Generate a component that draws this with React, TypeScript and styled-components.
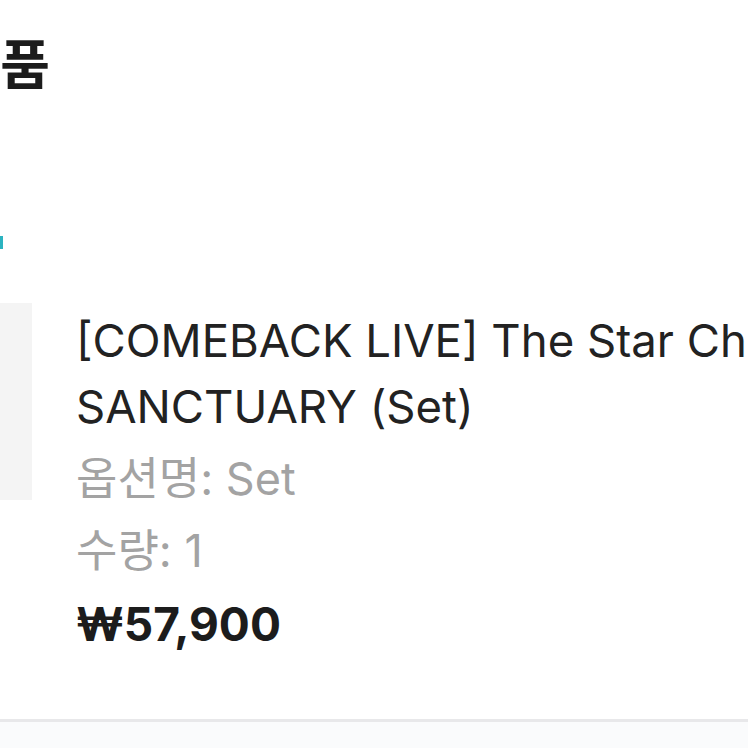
import React from 'react';
import styled, { createGlobalStyle } from 'styled-components';

const GlobalStyle = createGlobalStyle`
  html, body {
    margin: 0;
    padding: 0;
    background: #ffffff;
  }
  body {
    font-family: Inter, "Noto Sans", "Noto Sans CJK KR", sans-serif;
    color: #1f1f1f;
  }
`;

const Page = styled.div`
  width: 748px;
  height: 748px;
  overflow: hidden;
  display: flex;
  flex-direction: column;
  background: #ffffff;
`;

const Section = styled.section`
  display: flex;
  flex-direction: column;
  flex: 1;
`;

// the page is scrolled sideways, only the end of the heading is visible
const Heading = styled.h2`
  margin: 26px 0 0;
  width: 50px;
  display: flex;
  justify-content: flex-end;
  font-family: "Noto Sans CJK KR", sans-serif;
  font-size: 54px;
  font-weight: 700;
  line-height: 72px;
  color: #1c1c1c;
  white-space: nowrap;
`;

const TabMark = styled.div`
  margin-top: 138px;
  width: 3px;
  height: 13px;
  background: #2bb3c0;
`;

const ProductRow = styled.div`
  display: flex;
  align-items: flex-start;
  gap: 44px;
  margin-top: 54px;
`;

const Thumb = styled.div`
  flex: none;
  width: 200px;
  height: 197px;
  margin-left: -168px;
  background: #f4f4f4;
`;

const Info = styled.div`
  display: flex;
  flex-direction: column;
  min-width: 0;
  margin-top: 5px;
`;

const Title = styled.div`
  font-size: 45.5px;
  line-height: 66px;
  padding-bottom: 3px;
  color: #222222;
  white-space: nowrap;
`;

const Meta = styled.div`
  font-family: Inter, "Noto Sans CJK KR", sans-serif;
  font-size: 45px;
  line-height: 72px;
  color: #a3a3a3;
`;

const Price = styled.div`
  font-size: 46px;
  font-weight: 700;
  line-height: 74px;
  color: #1c1c1c;
`;

const Footer = styled.div`
  height: 26px;
  border-top: 3px solid #e8e8ea;
  background: #fafbfc;
`;

export default function App() {
  return (
    <>
      <GlobalStyle />
      <Page>
        <Section>
          <Heading>주문상품</Heading>
          <TabMark />
          <ProductRow>
            <Thumb />
            <Info>
              <Title>
                [COMEBACK LIVE] The Star Chart
                <br />
                SANCTUARY (Set)
              </Title>
              <Meta>옵션명: Set</Meta>
              <Meta>수량: 1</Meta>
              <Price>₩57,900</Price>
            </Info>
          </ProductRow>
        </Section>
        <Footer />
      </Page>
    </>
  );
}
